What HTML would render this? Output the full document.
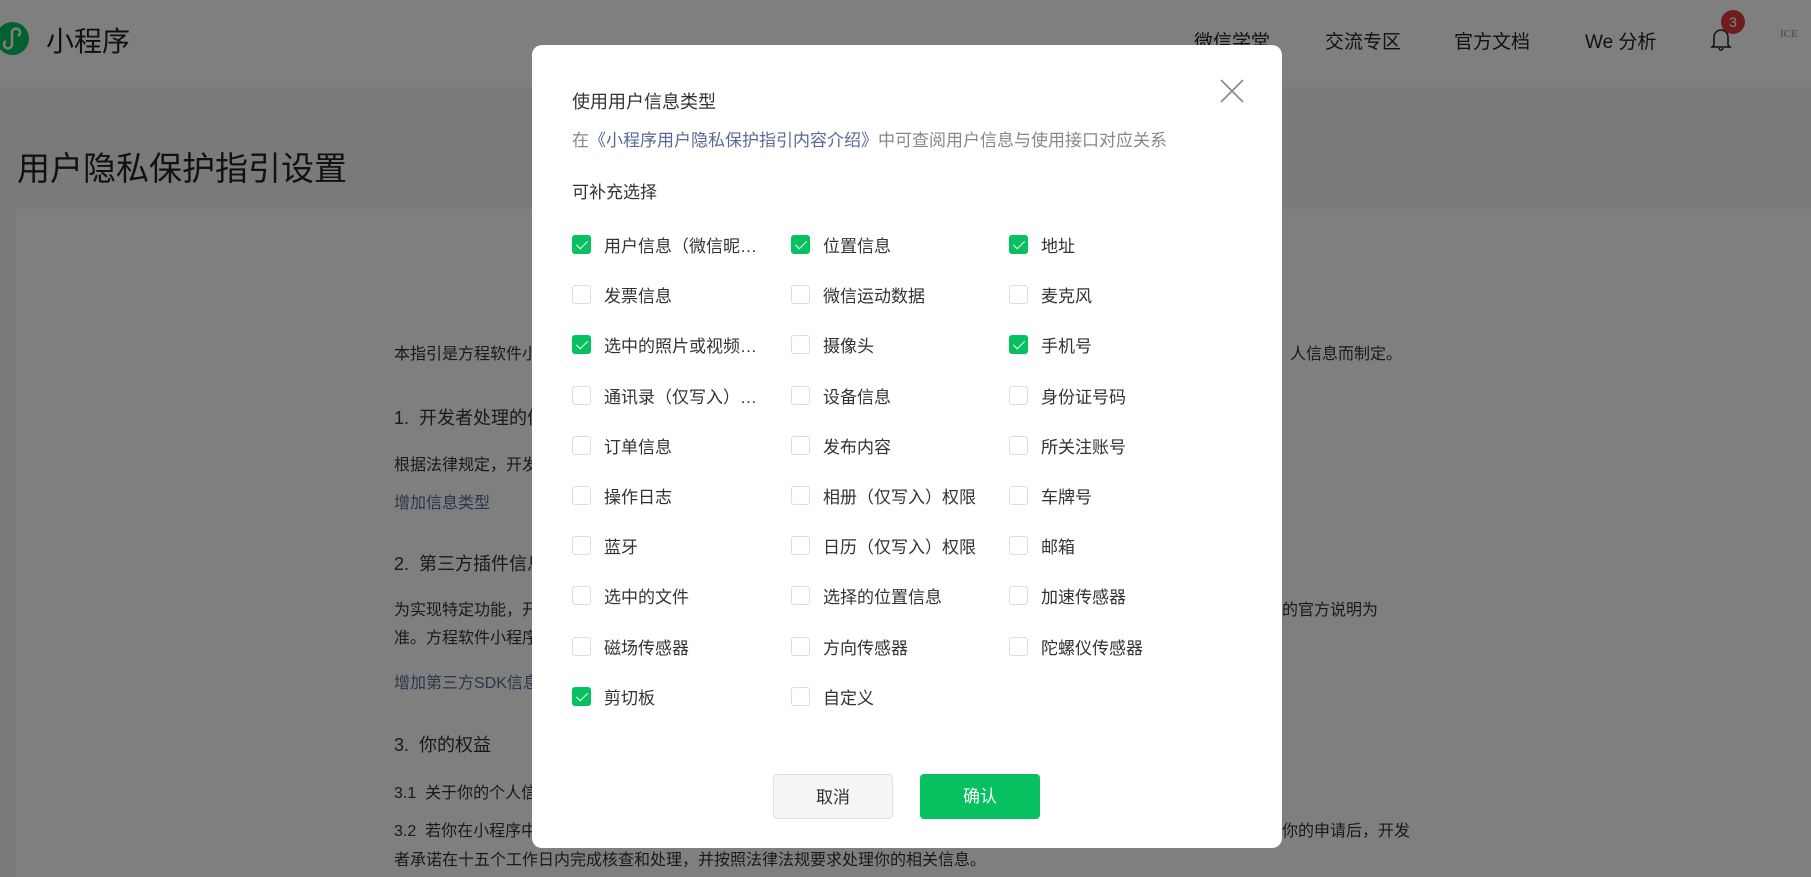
<!DOCTYPE html>
<html><head><meta charset="utf-8"><style>
*{margin:0;padding:0;box-sizing:border-box}
html,body{width:1811px;height:877px;overflow:hidden}
body{position:relative;background:#f5f5f5;font-family:"Liberation Sans","Noto Sans CJK SC",sans-serif;color:#333}
.hdr{position:absolute;left:0;top:0;width:1811px;height:87px;background:#fff}
.logo{position:absolute;left:-4px;top:22px;width:33px;height:33px;border-radius:50%;background:#07c160}
.brand{position:absolute;left:46px;top:20px;font-size:28px;color:#222}
.nav{position:absolute;top:27px;font-size:19px;color:#222}
.badge{position:absolute;left:1721px;top:10px;width:24px;height:24px;border-radius:50%;background:#e03a3a;color:#fff;font-size:14px;text-align:center;line-height:24px}
.title{position:absolute;left:17px;top:142px;font-size:33px;color:#222}
.card{position:absolute;left:16px;top:209px;width:1795px;height:668px;background:#fff}
.t{position:absolute;font-size:16px;color:#333;white-space:nowrap}
.lk{color:#576b95}
.ov{position:absolute;left:0;top:0;width:1811px;height:877px;background:rgba(0,0,0,.5)}
.modal{position:absolute;left:532px;top:45px;width:750px;height:803px;background:#fff;border-radius:10px}
.m{position:absolute;white-space:nowrap;color:#333}
.cb{position:absolute;width:19px;height:19px;border:1px solid #ddd;border-radius:3px;background:#fff}
.cb.on{background:#07c160;border-color:#07c160}
.cb.on:after{content:"";position:absolute;left:6px;top:2px;width:5px;height:10px;border:solid #fff;border-width:0 1.5px 1.5px 0;transform:rotate(45deg)}
.lb{position:absolute;font-size:17px;color:#333;white-space:nowrap}
.btn{position:absolute;width:120px;height:45px;border-radius:4px;font-size:17px;text-align:center;line-height:45px}
</style></head><body>
<div class="hdr">
<div class="logo"><svg width="33" height="33" viewBox="0 0 33 33"><path d="M10 19a4 4 0 1 0 6 3V11a4 4 0 1 1 6 3" fill="none" stroke="#fff" stroke-width="2.5"/></svg></div>
<div class="brand">小程序</div>
<div class="nav" style="left:1194px">微信学堂</div>
<div class="nav" style="left:1325px">交流专区</div>
<div class="nav" style="left:1454px">官方文档</div>
<div class="nav" style="left:1585px">We 分析</div>
<svg style="position:absolute;left:1709px;top:26px" width="24" height="26" viewBox="0 0 24 26"><path d="M5 19V11a7 7 0 0 1 14 0v8l2 2H3z M10 22a2 2 0 0 0 4 0" fill="none" stroke="#222" stroke-width="1.5"/></svg>
<div class="badge">3</div>
<div style="position:absolute;left:1780px;top:28px;font-size:11px;color:#b58a3a;font-family:'Liberation Serif',serif">ICE</div>
</div>
<div class="title">用户隐私保护指引设置</div>
<div class="card"></div>
<div class="t" style="left:394px;top:340px">本指引是方程软件小程序开发者方程软件（以下简称“开发者”）为处理你的个人信息而制定。</div>
<div class="t" style="left:1290px;top:340px;background:#fff">人信息而制定。</div>
<div class="t" style="left:394px;top:404px;font-size:18px">1.&nbsp; 开发者处理的信息</div>
<div class="t" style="left:394px;top:451px">根据法律规定，开发者仅处理实现小程序功能所必要的信息。</div>
<div class="t lk" style="left:394px;top:489px">增加信息类型</div>
<div class="t" style="left:394px;top:550px;font-size:18px">2.&nbsp; 第三方插件信息/SDK信息</div>
<div class="t" style="left:394px;top:596px">为实现特定功能，开发者可能需要将你的信息提供给第三方，第三方处理信息的规则以其公布</div>
<div class="t" style="left:1282px;top:596px;background:#fff">的官方说明为</div>
<div class="t" style="left:394px;top:624px">准。方程软件小程序开发者仍将承担相应责任。</div>
<div class="t lk" style="left:394px;top:669px">增加第三方SDK信息</div>
<div class="t" style="left:394px;top:731px;font-size:18px">3.&nbsp; 你的权益</div>
<div class="t" style="left:394px;top:779px">3.1&nbsp; 关于你的个人信息，你可以通过以下方式与开发者联系，行使查阅、复制、更正、删除等法定权利。</div>
<div class="t" style="left:394px;top:817px">3.2&nbsp; 若你在小程序中注册了账号，你可以通过以下方式与开发者联系，申请注销你在小程序中使用的账号。</div>
<div class="t" style="left:1282px;top:817px;background:#fff">你的申请后，开发</div>
<div class="t" style="left:394px;top:846px">者承诺在十五个工作日内完成核查和处理，并按照法律法规要求处理你的相关信息。</div>
<div class="ov"></div>
<div class="modal">
<div class="m" style="left:40px;top:43px;font-size:18px">使用用户信息类型</div>
<svg style="position:absolute;left:688px;top:34px" width="24" height="24" viewBox="0 0 24 24"><path d="M1 1L23 23M23 1L1 23" stroke="#888" stroke-width="1.6"/></svg>
<div class="m" style="left:40px;top:81px;font-size:17px;color:#888">在<span style="color:#576b95">《小程序用户隐私保护指引内容介绍》</span>中可查阅用户信息与使用接口对应关系</div>
<div class="m" style="left:40px;top:133px;font-size:17px">可补充选择</div>
</div>
<div id="grid"></div>
<script>
var items=[["用户信息（微信昵…",1],["位置信息",1],["地址",1],["发票信息",0],["微信运动数据",0],["麦克风",0],["选中的照片或视频…",1],["摄像头",0],["手机号",1],["通讯录（仅写入）…",0],["设备信息",0],["身份证号码",0],["订单信息",0],["发布内容",0],["所关注账号",0],["操作日志",0],["相册（仅写入）权限",0],["车牌号",0],["蓝牙",0],["日历（仅写入）权限",0],["邮箱",0],["选中的文件",0],["选择的位置信息",0],["加速传感器",0],["磁场传感器",0],["方向传感器",0],["陀螺仪传感器",0],["剪切板",1],["自定义",0]];
var cx=[572,791,1009],h="";
items.forEach(function(it,i){var r=Math.floor(i/3),c=i%3,y=245+r*50.2;
h+='<div class="cb'+(it[1]?' on':'')+'" style="left:'+cx[c]+'px;top:'+(y-10)+'px"></div><div class="lb" style="left:'+(cx[c]+32)+'px;top:'+(y-13)+'px">'+it[0]+'</div>';});
document.getElementById('grid').innerHTML=h;
</script>
<div class="btn" style="left:773px;top:774px;background:#f4f5f6;border:1px solid #e0e0e0;color:#333">取消</div>
<div class="btn" style="left:920px;top:774px;background:#07c160;color:#fff">确认</div>
</body></html>
